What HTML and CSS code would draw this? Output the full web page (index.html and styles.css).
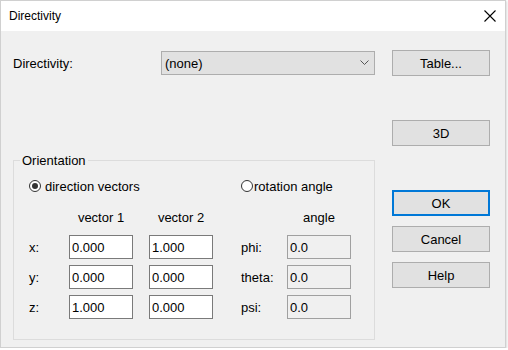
FILE: index.html
```html
<!DOCTYPE html>
<html lang="en">
<head>
    <meta charset="UTF-8">
    <title>Directivity</title>
    <link rel="stylesheet" href="styles.css">
</head>
<body>

    <div class="window">
        <div class="titlebar">
            <span class="title">Directivity</span>
            <svg class="close" width="12" height="12" viewBox="0 0 12 12">
                <path d="M0.5 0.5 L11.5 11.5 M11.5 0.5 L0.5 11.5" stroke="#000" stroke-width="1.1" fill="none"/>
            </svg>
        </div>

        <div class="client">
            <div class="main">
                <div class="top-row">
                    <span class="top-label">Directivity:</span>
                    <div class="combo">
                        <span>(none)</span>
                        <svg width="9" height="6" viewBox="0 0 9 6">
                            <path d="M0.5 0.5 L4.5 4.5 L8.5 0.5" stroke="#555" stroke-width="1" fill="none"/>
                        </svg>
                    </div>
                </div>

                <fieldset class="group">
                    <legend>Orientation</legend>
                    <div class="grid">
                        <label class="radio radio-left"><span class="dot checked"></span>direction vectors</label>
                        <label class="radio radio-right"><span class="dot"></span>rotation angle</label>

                        <span class="head col-v1">vector 1</span>
                        <span class="head col-v2">vector 2</span>
                        <span class="head col-ang">angle</span>

                        <span class="lbl">x:</span>
                        <input class="field col-v1" value="0.000">
                        <input class="field col-v2" value="1.000">
                        <span class="lbl col-al">phi:</span>
                        <input class="field col-ang off" value="0.0" disabled>

                        <span class="lbl">y:</span>
                        <input class="field col-v1" value="0.000">
                        <input class="field col-v2" value="0.000">
                        <span class="lbl col-al">theta:</span>
                        <input class="field col-ang off" value="0.0" disabled>

                        <span class="lbl">z:</span>
                        <input class="field col-v1" value="1.000">
                        <input class="field col-v2" value="0.000">
                        <span class="lbl col-al">psi:</span>
                        <input class="field col-ang off" value="0.0" disabled>
                    </div>
                </fieldset>
            </div>

            <div class="side">
                <button class="btn">Table...</button>
                <button class="btn gap-big">3D</button>
                <button class="btn gap-big default">OK</button>
                <button class="btn gap-small">Cancel</button>
                <button class="btn gap-small">Help</button>
            </div>
        </div>
    </div>

</body>
</html>
```

FILE: styles.css
```css
body, html {
    margin: 0;
    padding: 0;
    background: #ffffff;
    font-family: 'Liberation Sans', Arial, sans-serif;
    font-size: 13px;
    color: #000000;
}

.window {
    width: 504px;
    height: 346px;
    border: 1px solid #d0d0d0;
    background: #f0f0f0;
    box-shadow: 1px 1px 2px rgba(0, 0, 0, 0.15);
    display: flex;
    flex-direction: column;
}

.titlebar {
    height: 30px;
    background: #ffffff;
    display: flex;
    align-items: center;
    justify-content: space-between;
    padding: 0 9px 0 8px;
}

.title {
    font-size: 12px;
    margin-top: -1px;
}

.close {
    margin-top: -1px;
}

.client {
    display: flex;
    padding-left: 12px;
}

.main {
    width: 362px;
    padding-top: 20px;
}

.top-row {
    display: flex;
    align-items: center;
    height: 24px;
}

.top-label {
    width: 148px;
}

.combo {
    flex: 1;
    height: 22px;
    border: 1px solid #adadad;
    background: #e1e1e1;
    display: flex;
    align-items: center;
    justify-content: space-between;
    padding: 0 5px 0 3px;
}

.group {
    margin: 78px 0 0 0;
    padding: 8px 0 20px 15px;
    border: 1px solid #dcdcdc;
    min-width: 0;
}

.group legend {
    padding: 0 2px;
    margin-left: -9px;
}

.grid {
    display: grid;
    grid-template-columns: 40px 64px 16px 64px 28px 46px 64px;
    grid-template-rows: 20px 27px 24px 24px 24px;
    row-gap: 6px;
    align-items: center;
}

.radio {
    display: flex;
    align-items: center;
    white-space: nowrap;
}

.radio-left {
    grid-column: 1 / 5;
}

.radio-right {
    grid-column: 6 / 8;
}

.dot {
    width: 10px;
    height: 10px;
    border: 1px solid #333333;
    border-radius: 50%;
    background: #ffffff;
    margin-right: 1px;
    position: relative;
    flex-shrink: 0;
}

.radio-left .dot {
    margin-right: 4px;
}

.dot.checked::after {
    content: '';
    position: absolute;
    left: 2px;
    top: 2px;
    width: 6px;
    height: 6px;
    border-radius: 50%;
    background: #333333;
}

.head {
    text-align: center;
    align-self: end;
    margin-bottom: 4px;
}

.col-v1 { grid-column: 2; }
.col-v2 { grid-column: 4; }
.col-al { grid-column: 6; }
.col-ang { grid-column: 7; }

.lbl {
    grid-column: 1;
}

.lbl.col-al {
    grid-column: 6;
}

.field {
    box-sizing: border-box;
    width: 64px;
    height: 24px;
    margin: 0;
    border: 1px solid #7a7a7a;
    background: #ffffff;
    padding: 0 2px;
    font-family: 'Liberation Sans', Arial, sans-serif;
    font-size: 13px;
    color: #000000;
    outline: none;
}

.field.off {
    background: #f0f0f0;
    border-color: #a0a0a0;
    color: #000000;
}

.side {
    margin-left: 17px;
    padding-top: 19px;
    display: flex;
    flex-direction: column;
}

.btn {
    box-sizing: border-box;
    width: 98px;
    height: 26px;
    margin: 0;
    border: 1px solid #adadad;
    background: #e1e1e1;
    font-family: 'Liberation Sans', Arial, sans-serif;
    font-size: 13px;
    color: #000000;
    padding: 0;
}

.btn.default {
    border: 2px solid #0078d7;
}

.gap-big {
    margin-top: 44px;
}

.gap-small {
    margin-top: 10px;
}
```
